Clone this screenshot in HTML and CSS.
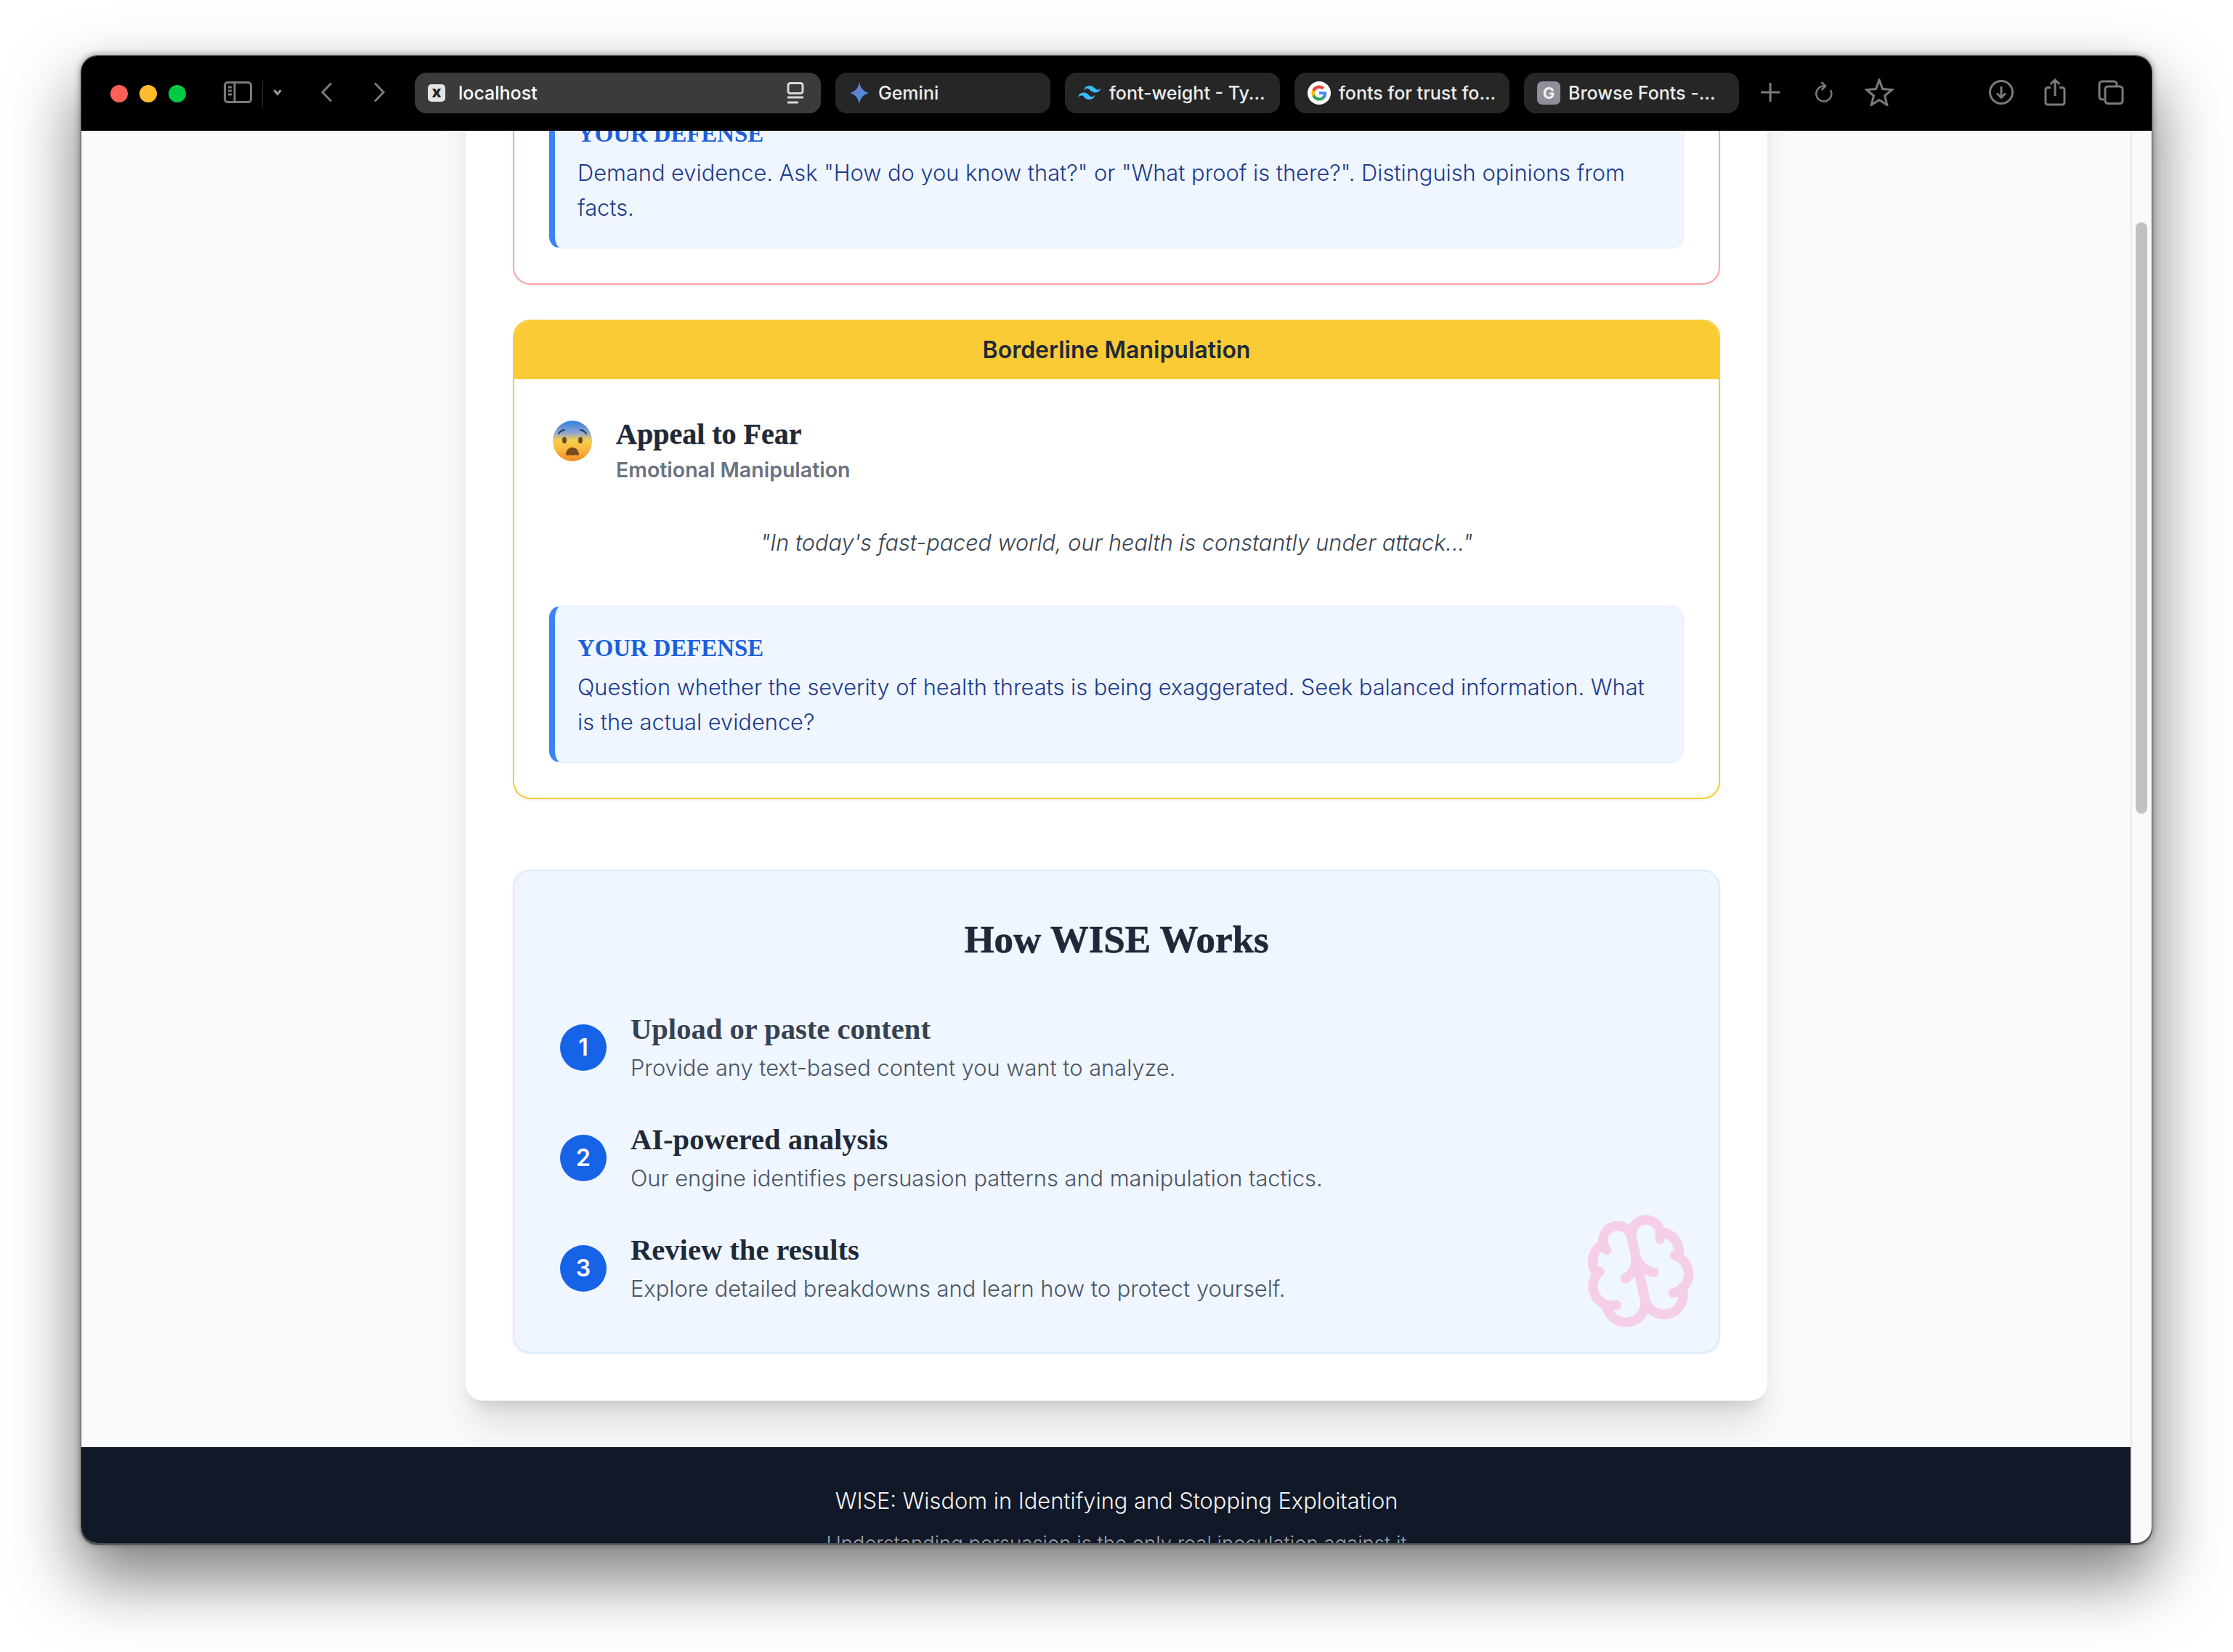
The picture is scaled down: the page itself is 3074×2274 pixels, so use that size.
FILE: index.html
```html
<!DOCTYPE html>
<html lang="en">
    <head>
        <meta charset="utf-8">
        <title>WISE</title>
        <link rel="stylesheet" href="styles.css">
    </head>
    <body>
        <div class="window">
            <header class="toolbar">
                <div class="lights">
                    <span class="light red"></span>
                    <span class="light yellow"></span>
                    <span class="light green"></span>
                </div>
                <svg class="tool sidebar-icon" width="39" height="30" viewBox="0 0 39 30"><rect x="1.5" y="1.5" width="36" height="27" rx="4"/><path d="M15 1.5v27M6 8h5M6 13h5M6 18h5"/></svg>
                <span class="divider"></span>
                <svg class="tool chevron-down" width="12" height="10" viewBox="0 0 12 10"><path d="M1.5 2l4.500 5.500L10.500 2"/></svg>
                <svg class="tool back" width="16" height="28" viewBox="0 0 16 28"><path d="M14 1.500L2 14l12 12.500"/></svg>
                <svg class="tool forward" width="16" height="28" viewBox="0 0 16 28"><path d="M2 1.500L14 14 2 26.500"/></svg>

                <div class="tabs">
                    <div class="tab tab-url">
                        <span class="favicon-x">x</span>
                        <span class="tab-title">localhost</span>
                        <svg class="reader" width="24" height="30" viewBox="0 0 24 30"><rect x="2" y="1.500" width="20" height="14" rx="3"/><path d="M1 21h22M1 28h15"/></svg>
                    </div>
                    <div class="tab">
                        <svg class="favicon" width="30" height="32" viewBox="0 0 30 32"><defs><linearGradient id="gem" x1="0" y1="0" x2="1" y2="1"><stop offset="0" stop-color="#7b6fc4"/><stop offset="1" stop-color="#3b9bea"/></linearGradient></defs><path fill="url(#gem)" d="M15 1c1.500 8 5.500 13 13 15-7.500 2-11.500 7-13 15-1.500-8-5.500-13-13-15 7.500-2 11.500-7 13-15z"/></svg>
                        <span class="tab-title">Gemini</span>
                    </div>
                    <div class="tab">
                        <svg class="favicon" width="32" height="20" viewBox="0 0 32 20"><path fill="#38bdf8" d="M16 0c-4.300 0-6.900 2.100-8 6.400 1.600-2.100 3.500-2.900 5.600-2.400 1.200.3 2.100 1.200 3 2.100 1.500 1.500 3.200 3.300 7 3.300 4.300 0 6.900-2.100 8-6.400-1.600 2.100-3.500 2.900-5.600 2.400-1.200-.3-2.100-1.200-3-2.100C21.500 1.800 19.800 0 16 0zM8 9.600c-4.300 0-6.900 2.100-8 6.400 1.600-2.100 3.500-2.900 5.600-2.400 1.200.3 2.100 1.200 3 2.100 1.500 1.500 3.200 3.300 7 3.300 4.300 0 6.900-2.100 8-6.400-1.600 2.100-3.500 2.900-5.600 2.400-1.200-.3-2.100-1.200-3-2.100-1.500-1.500-3.200-3.300-7-3.300z"/></svg>
                        <span class="tab-title">font-weight - Ty...</span>
                    </div>
                    <div class="tab">
                        <svg class="favicon" width="32" height="32" viewBox="0 0 32 32"><circle cx="16" cy="16" r="16" fill="#fff"/><g transform="translate(5 5) scale(.46)"><path fill="#4285f4" d="M46.100 24.500c0-1.600-.1-3.100-.4-4.500H24v8.500h12.400c-.5 2.900-2.200 5.300-4.600 6.900v5.800h7.500c4.400-4 6.800-10 6.800-16.700z"/><path fill="#34a853" d="M24 47c6.200 0 11.500-2.100 15.300-5.600l-7.500-5.800c-2.100 1.400-4.700 2.200-7.800 2.200-6 0-11.100-4-12.900-9.500H3.400v6C7.200 41.800 15 47 24 47z"/><path fill="#fbbc05" d="M11.100 28.300c-.5-1.400-.7-2.800-.7-4.300s.3-3 .7-4.300v-6H3.400C1.800 16.800 1 20.300 1 24s.8 7.200 2.400 10.300l7.700-6z"/><path fill="#ea4335" d="M24 10.100c3.400 0 6.400 1.200 8.800 3.400l6.600-6.600C35.500 3.200 30.200 1 24 1 15 1 7.200 6.200 3.400 13.700l7.700 6c1.800-5.500 6.900-9.600 12.900-9.600z"/></g></svg>
                        <span class="tab-title">fonts for trust fo...</span>
                    </div>
                    <div class="tab">
                        <span class="favicon-g">G</span>
                        <span class="tab-title">Browse Fonts -...</span>
                    </div>
                </div>

                <svg class="tool plus" width="28" height="28" viewBox="0 0 28 28"><path d="M14 1v26M1 14h26"/></svg>
                <svg class="tool reload" width="26" height="30" viewBox="0 0 26 30"><path d="M14 6.500a10.500 10.500 0 1 0 9 5.500M10.500 1l5.500 5.500L10.500 12"/></svg>
                <svg class="tool star" width="40" height="38" viewBox="0 0 40 38"><path d="M20 2l4.600 12.500 13 1-10 8.300 3.200 12.700L20 29.600 9.200 36.500l3.200-12.700-10-8.300 13-1z"/></svg>
                <svg class="tool download" width="34" height="34" viewBox="0 0 34 34"><circle cx="17" cy="17" r="15.500"/><path d="M17 9v15M11 18.500l6 6 6-6"/></svg>
                <svg class="tool share" width="30" height="38" viewBox="0 0 30 38"><path d="M9 12.500H5a3 3 0 0 0-3 3V33a3 3 0 0 0 3 3h20a3 3 0 0 0 3-3V15.500a3 3 0 0 0-3-3h-4M15 24V2M8.500 8L15 2l6.500 6"/></svg>
                <svg class="tool copies" width="36" height="34" viewBox="0 0 36 34"><path d="M8 27H6a4 4 0 0 1-4-4V6a4 4 0 0 1 4-4h16a4 4 0 0 1 4 4v2"/><rect x="10" y="9" width="24" height="23.500" rx="4"/></svg>
            </header>

            <div class="viewport">
                <main class="panel">
                    <section class="card card-red">
                        <div class="card-body">
                            <div class="defense">
                                <h4>Your Defense</h4>
                                <p>Demand evidence. Ask "How do you know that?" or "What proof is there?". Distinguish opinions from facts.</p>
                            </div>
                        </div>
                    </section>

                    <section class="card card-yellow">
                        <div class="card-head">Borderline Manipulation</div>
                        <div class="card-body">
                            <div class="tactic">
                                <svg class="emoji" width="54" height="56" viewBox="0 0 54 56">
                                    <defs>
                                        <linearGradient id="face" x1="0" y1="0" x2="0" y2="1">
                                            <stop offset="0" stop-color="#2f7fe0"/>
                                            <stop offset=".3" stop-color="#8fa5d0"/>
                                            <stop offset=".48" stop-color="#f5cf4f"/>
                                            <stop offset=".75" stop-color="#fbb13c"/>
                                            <stop offset="1" stop-color="#ef8a1f"/>
                                        </linearGradient>
                                    </defs>
                                    <ellipse cx="27" cy="28" rx="27" ry="28" fill="url(#face)"/>
                                    <path d="M8 18c2-3 5-5 8-5M46 18c-2-3-5-5-8-5" fill="none" stroke="#1f3b5c" stroke-width="2" stroke-linecap="round"/>
                                    <ellipse cx="16" cy="27" rx="3" ry="4.500" fill="#6b4a1d"/>
                                    <ellipse cx="38" cy="27" rx="3" ry="4.500" fill="#6b4a1d"/>
                                    <path d="M18 47c0-6 4-10 9-10s9 4 9 10c0 1-3 .5-9 .5s-9 .5-9-.5z" fill="#7a4a1e"/>
                                </svg>
                                <div>
                                    <h3>Appeal to Fear</h3>
                                    <p class="tactic-type">Emotional Manipulation</p>
                                </div>
                            </div>
                            <p class="quote">"In today's fast-paced world, our health is constantly under attack..."</p>
                            <div class="defense">
                                <h4>Your Defense</h4>
                                <p>Question whether the severity of health threats is being exaggerated. Seek balanced information. What is the actual evidence?</p>
                            </div>
                        </div>
                    </section>

                    <section class="how">
                        <h2>How WISE Works</h2>
                        <div class="steps">
                            <div class="step">
                                <span class="step-num">1</span>
                                <div>
                                    <h5 class="soft">Upload or paste content</h5>
                                    <p>Provide any text-based content you want to analyze.</p>
                                </div>
                            </div>
                            <div class="step">
                                <span class="step-num">2</span>
                                <div>
                                    <h5>AI-powered analysis</h5>
                                    <p>Our engine identifies persuasion patterns and manipulation tactics.</p>
                                </div>
                            </div>
                            <div class="step">
                                <span class="step-num">3</span>
                                <div>
                                    <h5>Review the results</h5>
                                    <p>Explore detailed breakdowns and learn how to protect yourself.</p>
                                </div>
                            </div>
                        </div>
                        <svg class="brain" width="160" height="160" viewBox="0 0 24 24"><path d="M12 5a3 3 0 1 0-5.997.125 4 4 0 0 0-2.526 5.770 4 4 0 0 0 .556 6.588A4 4 0 1 0 12 18Z"/><path d="M12 5a3 3 0 1 1 5.997.125 4 4 0 0 1 2.526 5.770 4 4 0 0 1-.556 6.588A4 4 0 1 1 12 18Z"/><path d="M15 13a4.500 4.500 0 0 1-3-4 4.500 4.500 0 0 1-3 4"/><path d="M17.599 6.500a3 3 0 0 0 .399-1.375"/><path d="M6.003 5.125A3 3 0 0 0 6.401 6.500"/><path d="M3.477 10.896a4 4 0 0 1 .585-.396"/><path d="M19.938 10.500a4 4 0 0 1 .585.396"/><path d="M6 18a4 4 0 0 1-1.967-.516"/><path d="M19.967 17.484A4 4 0 0 1 18 18"/></svg>
                    </section>
                </main>

                <footer class="footer">
                    <p>WISE: Wisdom in Identifying and Stopping Exploitation</p>
                    <small>Understanding persuasion is the only real inoculation against it</small>
                </footer>

                <div class="scrollbar"><span class="thumb"></span></div>
            </div>
        </div>
    </body>
</html>
```
FILE: styles.css
```css
* {
    box-sizing: border-box;
}
html, body {
    margin: 0;
    height: 2274px;
    overflow: hidden;
}
body {
    background: #fff;
    padding: 77px 112px 150px;
    font-family: Inter, "Liberation Sans", sans-serif;
}
h2, h3, h4, h5, p {
    margin: 0;
}

/* browser window */
.window {
    height: 2047px;
    display: flex;
    flex-direction: column;
    overflow: hidden;
    border-radius: 22px;
    box-shadow: 0 0 0 1px #4a4a4c, 0 2px 0 1px #5a5a5c, 0 0 8px 2px rgba(0,0,0,.35), 0 44px 90px 6px rgba(0,0,0,.5);
}
.toolbar {
    height: 103px;
    flex: none;
    display: flex;
    align-items: center;
    background: #000;
    padding-left: 40px;
}
.lights {
    display: flex;
    gap: 16px;
}
.light {
    width: 24px;
    height: 24px;
    border-radius: 50%;
}
.red { background: #ff5f57; }
.yellow { background: #febc2e; }
.green { background: #00c944; }

.tool {
    flex: none;
    fill: none;
    stroke: #7b7b7b;
    stroke-width: 3;
    margin-top: -3px;
}
.sidebar-icon { margin-left: 52px; }
.divider {
    width: 1px;
    height: 36px;
    background: #2a2a2a;
    margin-left: 14px;
}
.chevron-down { margin-left: 14px; stroke: #9a9a9a; }
.back { margin-left: 54px; }
.forward { margin-left: 56px; }
.tabs {
    display: flex;
    gap: 20px;
    margin-left: 41px;
    margin-top: -1px;
}
.tab {
    width: 296px;
    height: 56px;
    display: flex;
    align-items: center;
    gap: 11px;
    padding-left: 18px;
    background: #262626;
    border-radius: 16px;
    color: #ededed;
    font-size: 25px;
    font-weight: 500;
    white-space: nowrap;
}
.tab-url {
    width: 559px;
    background: #3b3b3b;
    color: #fff;
    gap: 18px;
}
.tab-title {
    line-height: 56px;
}
.favicon { flex: none; }
.favicon-x {
    width: 24px;
    height: 24px;
    background: #e4e4e4;
    border-radius: 5px;
    color: #222;
    font-size: 22px;
    font-weight: 800;
    line-height: 21px;
    text-align: center;
}
.reader {
    margin-left: auto;
    margin-right: 23px;
    fill: none;
    stroke: #d8d8d8;
    stroke-width: 3;
}
.favicon-g {
    width: 32px;
    height: 32px;
    background: #8f909b;
    border-radius: 7px;
    color: #f2f2f2;
    font-size: 22px;
    font-weight: 700;
    line-height: 32px;
    text-align: center;
}
.plus { margin-left: 29px; }
.reload { margin-left: 46px; stroke-width: 2.500; }
.star { margin-left: 44px; }
.download { margin-left: 131px; }
.share { margin-left: 42px; }
.copies { margin-left: 44px; }

/* page under the toolbar */
.viewport {
    position: relative;
    flex: 1;
    overflow: hidden;
    background: #f9fafb;
}
.panel {
    width: 1792px;
    margin: -104px auto 64px;
    padding: 0 65px 65px;
    background: #fff;
    border-radius: 24px;
    box-shadow: 0 40px 50px -10px rgba(0,0,0,.12), 0 16px 20px -12px rgba(0,0,0,.12);
}
.card {
    background: #fff;
    border: 2px solid #fca5a5;
    border-radius: 24px;
    margin-bottom: 48px;
    overflow: hidden;
    box-shadow: 0 2px 4px rgba(0,0,0,.06);
}
.card-yellow {
    border-color: #fbcb35;
    margin-bottom: 97px;
}
.card-head {
    height: 80px;
    background: #fbcb35;
    color: #1f2937;
    font-size: 32px;
    font-weight: 600;
    line-height: 80px;
    text-align: center;
}
.card-body {
    padding: 48px;
}
.tactic {
    display: flex;
}
.emoji {
    margin: 9px 33px 0 5px;
    flex: none;
}
.tactic h3 {
    font-family: "Liberation Serif", serif;
    font-size: 40px;
    font-weight: 700;
    line-height: 56px;
    color: #1f2937;
    -webkit-text-stroke: .4px #1f2937;
}
.tactic-type {
    font-size: 28.5px;
    font-weight: 600;
    line-height: 40px;
    margin-top: 1px;
    color: #6b7280;
}
.quote {
    margin: 56px 0 63px;
    font-size: 30.6px;
    font-style: italic;
    font-weight: 300;
    line-height: 48px;
    text-align: center;
    color: #374151;
}
.defense {
    padding: 33px 31px 31px;
    background: #eff6ff;
    border: 1px solid #e4eefd;
    border-left: 8px solid #3b82f6;
    border-radius: 16px;
    color: #1e3a8a;
    font-size: 30.8px;
    font-weight: 350;
    line-height: 48px;
}
.defense h4 {
    font-family: "Liberation Serif", serif;
    font-size: 32.8px;
    font-weight: 700;
    line-height: 48px;
    margin-bottom: 6px;
    text-transform: uppercase;
    color: #1d5fdb;
}

/* how it works box */
.how {
    position: relative;
    height: 666px;
    padding: 62px 63px 0;
    background: #eff6ff;
    border: 2px solid #dbeafe;
    border-radius: 24px;
    box-shadow: 0 2px 4px rgba(0,0,0,.05);
}
.how h2 {
    font-family: "Liberation Serif", serif;
    font-size: 53px;
    font-weight: 700;
    line-height: 64px;
    text-align: center;
    color: #1f2937;
    -webkit-text-stroke: .6px #1f2937;
}
.steps {
    margin-top: 65px;
    display: flex;
    flex-direction: column;
    gap: 48px;
}
.step {
    display: flex;
    align-items: center;
    gap: 33px;
}
.step-num {
    flex: none;
    width: 64px;
    height: 64px;
    border-radius: 50%;
    background: #1763e8;
    color: #fff;
    font-size: 32px;
    font-weight: 600;
    line-height: 64px;
    text-align: center;
}
.step h5 {
    font-family: "Liberation Serif", serif;
    font-size: 40.6px;
    font-weight: 700;
    line-height: 54px;
    color: #1f2937;
}
.step h5.soft {
    color: #374151;
}
.step p {
    font-size: 30.8px;
    font-weight: 350;
    line-height: 48px;
    margin-top: 2px;
    color: #4b5563;
}
.brain {
    position: absolute;
    right: 30px;
    bottom: 32px;
    fill: none;
    stroke: #f5cfe9;
    stroke-width: 2;
    stroke-linecap: round;
    stroke-linejoin: round;
    transform: rotate(-12deg);
}

.footer {
    height: 200px;
    padding-top: 50px;
    background: #111827;
    text-align: center;
    color: #f3f4f6;
    font-size: 30.8px;
    font-weight: 350;
    line-height: 48px;
}
.footer small {
    display: block;
    margin-top: 14px;
    font-size: 27.5px;
    line-height: 40px;
    color: #9ca3af;
}
.scrollbar {
    position: absolute;
    top: 0;
    right: 0;
    bottom: 0;
    width: 29px;
    background: #fafafa;
    border-left: 2px solid #e8e8e8;
}
.thumb {
    position: absolute;
    top: 126px;
    left: 5px;
    width: 16px;
    height: 814px;
    border-radius: 8px;
    background: #c1c1c1;
}
```
